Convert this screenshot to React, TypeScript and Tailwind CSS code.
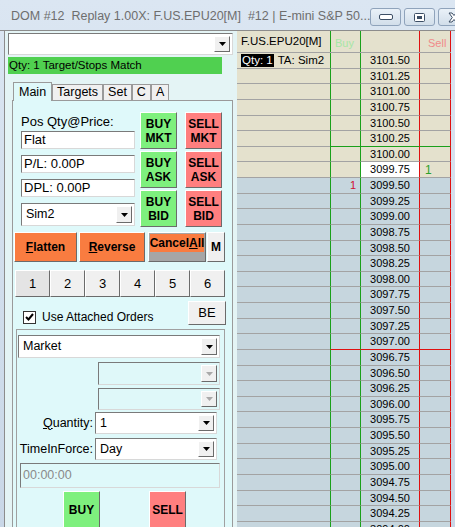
import React from 'react';

// price ladder, top to bottom, 0.25 tick
const PRICES: string[] = Array.from({ length: 31 }, (_, i) => (3101.5 - i * 0.25).toFixed(2));

const raised =
  'border border-t-white border-l-white border-r-[#6b6b6b] border-b-[#6b6b6b]';
const sunken =
  'border border-t-[#7a7a7a] border-l-[#7a7a7a] border-r-[#d8d8d8] border-b-[#d8d8d8]';

function DownArrow({ disabled }: { disabled?: boolean }) {
  return (
    <div className={`flex w-[16px] items-center justify-center bg-[#f0f0f0] ${raised}`}>
      <svg width="7" height="4" viewBox="0 0 7 4">
        <path d="M0 0h7L3.5 4z" fill={disabled ? '#a9a9a9' : '#000'} />
      </svg>
    </div>
  );
}

function Combo({ value, className = '', disabled }: { value?: string; className?: string; disabled?: boolean }) {
  return (
    <div
      className={`flex shrink-0 items-stretch p-[2px] ${sunken} ${disabled ? 'bg-[#dff8f9]' : 'bg-white'} ${className}`}
    >
      <div className="flex flex-1 items-center truncate pl-[2px] text-[12.5px]">{value}</div>
      <DownArrow disabled={disabled} />
    </div>
  );
}

function TextBox({ value }: { value: string }) {
  return (
    <div className={`flex h-[18px] items-center bg-white pl-[2px] text-[13px] ${sunken}`}>{value}</div>
  );
}

function TradeButton({ top, bottom, side }: { top: string; bottom?: string; side: 'buy' | 'sell' }) {
  return (
    <div
      className={`flex h-[37px] w-[37px] flex-col items-center justify-center text-[12px] font-bold leading-[14px] ${raised} ${
        side === 'buy' ? 'bg-[#7ef07e]' : 'bg-[#ff7f7f]'
      }`}
    >
      <span>{top}</span>
      {bottom && <span>{bottom}</span>}
    </div>
  );
}

function TitleButton({ kind }: { kind: 'min' | 'max' | 'close' }) {
  return (
    <div className="flex h-[18px] w-[31px] items-center justify-center rounded-[3px] border border-[#8fa3bb] bg-gradient-to-b from-[#eaf1f8] to-[#d2deea]">
      {kind === 'min' && (
        <svg width="14" height="6" viewBox="0 0 14 6">
          <rect x="0.5" y="0.5" width="13" height="5" rx="1.5" fill="#fff" stroke="#3c4e65" />
        </svg>
      )}
      {kind === 'max' && (
        <svg width="11" height="9" viewBox="0 0 11 9">
          <rect x="0.5" y="0.5" width="10" height="8" rx="1" fill="#fff" stroke="#3c4e65" />
          <rect x="3" y="3" width="5" height="3" fill="#3c4e65" />
        </svg>
      )}
      {kind === 'close' && (
        <svg width="14" height="11" viewBox="0 0 14 11">
          <path
            d="M2 1h3l2 2.5L9 1h3L8.7 5.5 12 10H9L7 7.5 5 10H2l3.3-4.5z"
            fill="#fff"
            stroke="#3c4e65"
            strokeWidth="1"
            strokeLinejoin="round"
          />
        </svg>
      )}
    </div>
  );
}

function LeftPanel() {
  return (
    <div className="flex h-full w-[232px] flex-col overflow-hidden border-l border-[#8c8c8c] bg-[#e4f4f5]">
      <Combo className="ml-[3px] mt-[2px] h-[22px] w-[225px]" />
      <div className="ml-[3px] mt-[2px] flex h-[17px] w-[214px] shrink-0 items-center bg-[#50d050] pl-[1px] text-[11.5px]">
        Qty: 1 Target/Stops Match
      </div>

      {/* tab strip */}
      <div className="ml-[8px] mt-[8px] flex h-[18px] shrink-0 items-end text-[12.5px]">
        <div className="relative z-10 -mb-px flex h-[19px] items-center border border-b-0 border-[#9a9a9a] bg-[#dff9fa] px-[5px]">
          Main
        </div>
        {['Targets', 'Set', 'C', 'A'].map((t) => (
          <div
            key={t}
            className="flex h-[16px] items-center border border-b-0 border-[#9a9a9a] bg-[#f0f0f0] px-[4px]"
          >
            {t}
          </div>
        ))}
      </div>

      {/* tab page */}
      <div className="ml-[7px] w-[221px] flex-1 border border-[#9a9a9a] bg-[#dff9fa]">
        <div className="flex pl-[8px] pt-[11px]">
          <div className="flex w-[114px] flex-col">
            <div className="flex h-[19px] items-end text-[13px]">Pos Qty@Price:</div>
            <TextBox value="Flat" />
            <div className="mt-[6px]">
              <TextBox value="P/L: 0.00P" />
            </div>
            <div className="mt-[6px]">
              <TextBox value="DPL: 0.00P" />
            </div>
            <Combo value="Sim2" className="mt-[6px] h-[23px]" />
          </div>
          <div className="ml-[5px] flex flex-col gap-[2px]">
            <TradeButton top="BUY" bottom="MKT" side="buy" />
            <TradeButton top="BUY" bottom="ASK" side="buy" />
            <TradeButton top="BUY" bottom="BID" side="buy" />
          </div>
          <div className="ml-[8px] flex flex-col gap-[2px]">
            <TradeButton top="SELL" bottom="MKT" side="sell" />
            <TradeButton top="SELL" bottom="ASK" side="sell" />
            <TradeButton top="SELL" bottom="BID" side="sell" />
          </div>
        </div>

        {/* flatten / reverse / cancel */}
        <div className="ml-[1px] mt-[5px] flex h-[30px] items-stretch text-[12px] font-bold">
          <div className={`flex w-[63px] items-center justify-center bg-[#f97c40] ${raised}`}>
            <span>
              <span className="underline">F</span>latten
            </span>
          </div>
          <div className={`ml-[2px] flex w-[66px] items-center justify-center bg-[#f97c40] ${raised}`}>
            <span>
              <span className="underline">R</span>everse
            </span>
          </div>
          <div className={`ml-[3px] flex w-[58px] flex-col bg-[#a6a6a6] ${raised}`}>
            <div className="mx-[1px] mt-[1px] flex h-[18px] items-center justify-center bg-[#f97c40]">
              Cancel<span className="underline">A</span>ll
            </div>
          </div>
          <div className={`ml-[1px] flex w-[18px] items-center justify-center bg-[#f0f0f0] ${raised}`}>M</div>
        </div>

        {/* quantity presets */}
        <div className="ml-[2px] mt-[8px] flex h-[27px]">
          {['1', '2', '3', '4', '5', '6'].map((n, i) => (
            <div
              key={n}
              className={`flex w-[35px] items-center justify-center text-[13px] ${raised} ${
                i === 0 ? 'bg-[#e4e4e4]' : 'bg-[#f0f0f0]'
              }`}
            >
              {n}
            </div>
          ))}
        </div>

        <div className="mt-[4px] flex h-[24px] items-center">
          <div className="ml-[10px] mt-[8px] flex items-center">
            <div className="flex h-[13px] w-[13px] items-center justify-center border border-[#333] bg-white">
              <svg width="9" height="8" viewBox="0 0 9 8">
                <path d="M1 4l2.5 2.5L8 1" fill="none" stroke="#000" strokeWidth="2" />
              </svg>
            </div>
            <span className="ml-[6px] text-[12px]">Use Attached Orders</span>
          </div>
          <div
            className={`ml-auto mr-[6px] flex h-[24px] w-[38px] items-center justify-center bg-[#f0f0f0] text-[13px] ${raised}`}
          >
            BE
          </div>
        </div>

        {/* order entry group */}
        <div className="ml-[3px] mt-[4px] flex h-[200px] w-[209px] flex-col border border-b-0 border-[#a0a0a0] pl-[1px]">
          <Combo value="Market" className="mt-[5px] h-[23px] w-[202px]" />
          <Combo disabled className="ml-[80px] mt-[4px] h-[23px] w-[122px]" />
          <Combo disabled className="ml-[80px] mt-[3px] h-[22px] w-[122px]" />
          <div className="mt-[2px] flex shrink-0 items-center">
            <span className="w-[77px] pr-[2px] text-right text-[12.5px]">
              <span className="underline">Q</span>uantity:
            </span>
            <Combo value="1" className="h-[22px] w-[122px]" />
          </div>
          <div className="mt-[4px] flex shrink-0 items-center">
            <span className="w-[77px] pr-[2px] text-right text-[12.5px]">TimeInForce:</span>
            <Combo value="Day" className="h-[22px] w-[122px]" />
          </div>
          <div
            className={`ml-[2px] mt-[3px] flex h-[25px] w-[200px] shrink-0 items-center bg-[#dff9fa] pl-[2px] text-[12.5px] text-[#8a8a8a] ${sunken}`}
          >
            00:00:00
          </div>
          <div className="mt-[3px] flex shrink-0">
            <div className="ml-[45px]">
              <TradeButton top="BUY" side="buy" />
            </div>
            <div className="ml-[49px]">
              <TradeButton top="SELL" side="sell" />
            </div>
          </div>
        </div>
      </div>
    </div>
  );
}

function Dom() {
  return (
    <div className="flex h-full w-[214px] flex-col overflow-hidden text-[11px]">
      {/* header row */}
      <div className="flex h-[22px] shrink-0 border-b border-[#a3a3a3] bg-[#e4e1cd]">
        <div className="w-[93px] pl-[4px] pt-[2px] text-[11.5px]">F.US.EPU20[M]</div>
        <div className="w-[30px] border-l border-[#1aa01a] pl-[4px] pt-[4px] text-[#a6e6a6]">Buy</div>
        <div className="w-[59px] border-l border-[#1aa01a]" />
        <div className="w-[32px] border-x border-[#e01010] pl-[8px] pt-[4px] text-[#f08a8a]">Sell</div>
      </div>
      {PRICES.map((p, i) => {
        const ask = i < 8;
        const rowBg = ask ? 'bg-[#e4e1cd]' : 'bg-[#c6d6de]';
        // green under the last ask block, red under 3097.00
        const line =
          i === 5 ? 'border-b-[#1aa01a]' : i === 18 ? 'border-b-[#e01010]' : 'border-b-[#a3a3a3]';
        return (
          <div key={p} className={`flex h-[15.625px] shrink-0 ${rowBg}`}>
            <div className="flex w-[93px] items-center border-b border-b-[#a3a3a3] pl-[4px]">
              {i === 0 && (
                <>
                  <span className="bg-black px-[1px] text-[11.5px] leading-[13px] text-white">Qty: 1</span>
                  <span className="ml-[4px] text-[11.5px]">TA: Sim2</span>
                </>
              )}
            </div>
            <div
              className={`flex w-[30px] items-center justify-end border-b border-l border-l-[#1aa01a] pr-[4px] text-[#d01030] ${line}`}
            >
              {p === '3099.50' ? '1' : ''}
            </div>
            <div
              className={`flex w-[59px] items-center justify-center border-b border-l border-l-[#1aa01a] ${line} ${
                p === '3099.75' ? 'bg-white' : ''
              }`}
            >
              {p}
            </div>
            <div
              className={`flex w-[32px] items-center border-x border-b border-x-[#e01010] pl-[5px] text-[12px] text-[#2aa02a] ${line}`}
            >
              {p === '3099.75' ? '1' : ''}
            </div>
          </div>
        );
      })}
    </div>
  );
}

export default function App() {
  return (
    <div
      className="flex h-[527px] w-[455px] flex-col overflow-hidden bg-gradient-to-b from-[#dbe6f2] to-[#c9d7e7] text-black"
      style={{ fontFamily: "'Liberation Sans', Arial, sans-serif" }}
    >
      {/* title bar */}
      <div className="flex h-[30px] shrink-0 items-center">
        <svg className="ml-[5px] mt-[2px]" width="16" height="14" viewBox="0 0 16 14">
          <rect x="0.5" y="0.5" width="15" height="13" fill="#f4f4f4" stroke="#6a7a8a" />
          <rect x="2" y="3" width="7" height="9" fill="#2e6e72" />
          <rect x="10" y="9" width="4" height="3" fill="#3aa04a" />
          <rect x="12" y="2" width="2" height="5" fill="#d02020" />
        </svg>
        <span className="ml-[6px] mt-[2px] whitespace-nowrap text-[12.5px] text-[#6e6e6e]">
          DOM #12&nbsp; Replay 1.00X: F.US.EPU20[M]&nbsp; #12 | E-mini S&amp;P 50...
        </span>
        <div className="ml-auto mr-[3px] mt-[4px] flex gap-[3px]">
          <TitleButton kind="min" />
          <TitleButton kind="max" />
          <TitleButton kind="close" />
        </div>
      </div>

      <div className="flex min-h-0 flex-1 border-t border-[#8c8c8c]">
        <div className="w-[4px] shrink-0" />
        <LeftPanel />
        <div className="w-[1px] shrink-0 bg-[#e4f4f5]" />
        <Dom />
        <div className="flex-1" />
      </div>
    </div>
  );
}
